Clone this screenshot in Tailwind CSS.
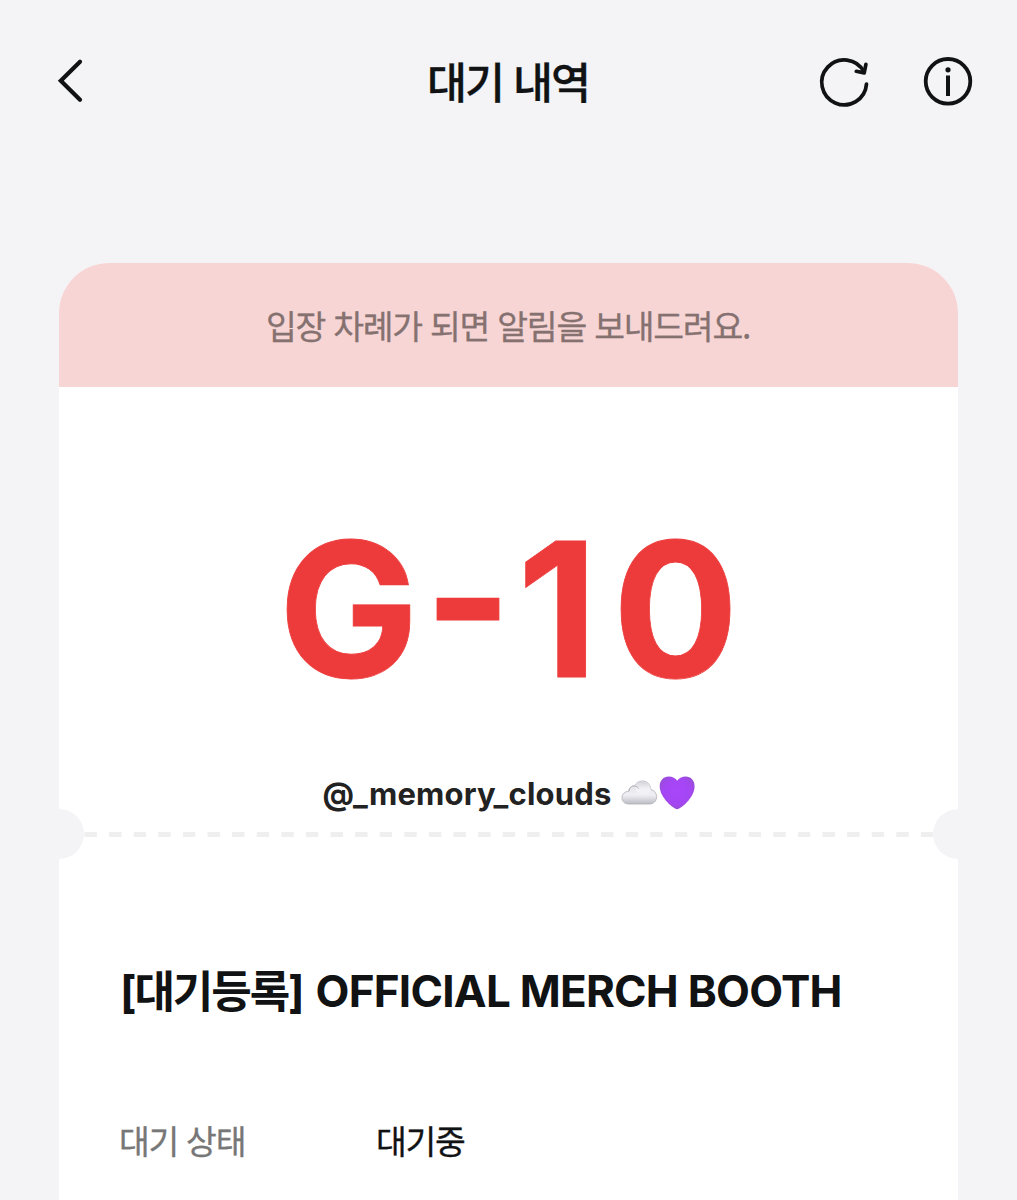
<!DOCTYPE html>
<html lang="ko">
  <head>
    <meta charset="UTF-8" />
    <meta name="viewport" content="width=device-width, initial-scale=1.0" />
    <title>대기 내역</title>
    <script src="https://cdn.jsdelivr.net/npm/@tailwindcss/browser@4"></script>
  </head>
  <body class="bg-[#f4f4f7] text-[#111213] font-['Inter','Noto_Sans_CJK_KR',sans-serif]">
    <div class="h-[1200px] overflow-hidden flex flex-col">
      <!-- Header -->
      <header class="h-[162px] shrink-0 grid grid-cols-3 items-center pl-[41px] pr-[42px]">
        <button class="w-10 h-14 ml-[9px]" aria-label="뒤로">
          <svg class="w-10 h-14" viewBox="0 0 40 56" fill="none" stroke="currentColor" stroke-width="4.2" stroke-linecap="round" stroke-linejoin="miter">
            <path d="M30 8.8 L10.8 27.7 L30 46.8" />
          </svg>
        </button>
        <h1 class="text-center text-[43.5px] leading-none font-medium tracking-[-2.1px] whitespace-nowrap font-['Noto_Sans_CJK_KR',sans-serif] [-webkit-text-stroke:0.3px]">대기 내역</h1>
        <div class="flex justify-end gap-[40px]">
          <button aria-label="새로고침">
            <svg class="w-[60px] h-[60px]" viewBox="0 0 60 60" fill="none" stroke="currentColor" stroke-width="3.7" stroke-linecap="round" stroke-linejoin="round">
              <path d="M51.5 33 A22.4 22.4 0 1 1 49 21" />
              <path d="M41.3 20.3 L49.2 21.9 L50.9 13.4" />
            </svg>
          </button>
          <button aria-label="안내">
            <svg class="w-[60px] h-[60px]" viewBox="0 0 60 60" fill="none">
              <circle cx="33" cy="30.3" r="22.3" stroke="currentColor" stroke-width="3.8" />
              <circle cx="33" cy="18.8" r="2.6" fill="currentColor" />
              <path d="M33 24.5 V45" stroke="currentColor" stroke-width="4" />
            </svg>
          </button>
        </div>
      </header>

      <!-- Ticket -->
      <main class="mt-[101px] mx-[59px] h-[937px] shrink-0 bg-white rounded-t-[50px] overflow-hidden">
        <div class="h-[124px] bg-[#f7d5d5] flex items-center justify-center">
          <p class="-mt-px -ml-px text-[33.5px] leading-none tracking-[-1.25px] text-[#85716f] font-['Noto_Sans_CJK_KR',sans-serif] whitespace-nowrap [-webkit-text-stroke:0.3px]">입장 차례가 되면 알림을 보내드려요.</p>
        </div>

        <!-- Waiting number -->
        <div class="h-[447px] flex flex-col items-center">
          <p class="mt-[128px] text-[187px] leading-[188px] font-bold text-[#ed3b3b] whitespace-nowrap [-webkit-text-stroke:0.8px]"><span class="tracking-[5.5px] [font-feature-settings:'case']">G-</span><span class="tracking-[14.5px]">1</span><span>0</span></p>
          <div class="mt-[68px] flex items-center h-[44px] gap-[9px]">
            <span class="text-[31px] leading-none font-bold tracking-[0.2px] text-[#222]">@_memory_clouds</span>
            <svg class="w-[74px] h-[36px]" viewBox="0 0 74 36">
              <defs>
                <linearGradient id="cloud" x1="0" y1="0" x2="0" y2="1">
                  <stop offset="0" stop-color="#dedee4" />
                  <stop offset=".6" stop-color="#f0f0f4" />
                  <stop offset="1" stop-color="#bcbcc5" />
                </linearGradient>
                <linearGradient id="puff" x1="0" y1="0" x2="0" y2="1">
                  <stop offset="0" stop-color="#d2d2d8" />
                  <stop offset=".6" stop-color="#f2f2f6" />
                </linearGradient>
                <radialGradient id="heart" cx=".5" cy=".45" r=".6">
                  <stop offset="0" stop-color="#a846fb" />
                  <stop offset=".65" stop-color="#a446f2" />
                  <stop offset="1" stop-color="#9550cf" />
                </radialGradient>
              </defs>
              <path d="M8 29 C3.5 29 1 26.3 1 22.8 C1 19 4 16.2 8 16.2 C8 12.8 10.6 10.7 13.6 11 C14.8 8 17.8 6 21.3 6 C26.3 6 29.6 9.6 29.7 14.4 C33.4 15.2 35.6 18.4 35.6 21.7 C35.6 26 32.6 29 28.3 29 Z" fill="url(#cloud)" stroke="#b0b0b8" stroke-width=".8" />
              <path d="M13.6 11 C14.8 8 17.8 6 21.3 6 C26.3 6 29.6 9.6 29.7 14.4 C29 19 24 20.5 20.5 18.5 C18 19.5 15 18.2 15.5 15.3" fill="url(#puff)" />
              <path d="M8 16.2 C8 12.8 10.6 10.7 13.6 11 C15.6 11.2 17 12.2 17.6 13.7" fill="none" stroke="#b5b5bd" stroke-width="1" />
              <path d="M56.2 34.2 C53 34.2 38.7 22.8 38.7 11.2 C38.7 5.4 42.5 1.4 47.6 1.4 C51.5 1.4 54.6 3.2 56.2 5.8 C57.8 3.2 60.9 1.4 64.8 1.4 C69.9 1.4 73.6 5.4 73.6 11.2 C73.6 22.8 59.4 34.2 56.2 34.2 Z" fill="url(#heart)" />
            </svg>
          </div>
        </div>

        <!-- Perforation -->
        <div class="relative -mt-[25px] h-[50px] flex items-center">
          <svg class="w-full h-[5px]" viewBox="0 0 899 5">
            <path d="M25.5 2.5 H874" stroke="#efeff0" stroke-width="5" stroke-dasharray="12.4 12.2" />
          </svg>
          <span class="absolute -left-[25px] top-0 w-[50px] h-[50px] rounded-full bg-[#f4f4f7]"></span>
          <span class="absolute -right-[25px] top-0 w-[50px] h-[50px] rounded-full bg-[#f4f4f7]"></span>
        </div>

        <!-- Details -->
        <section class="px-[61px] pt-[107px]">
          <h2 class="h-[50px] flex items-center text-[44px] leading-none font-bold whitespace-nowrap">
            <span class="mt-[2px] tracking-[-2.1px]">[대기등록]</span>
            <span class="ml-[13px] tracking-[-0.75px]">OFFICIAL MERCH BOOTH</span>
          </h2>
          <dl class="mt-[102px] h-[44px] flex items-center text-[33.5px] leading-none tracking-[-1.3px] font-['Noto_Sans_CJK_KR',sans-serif] [-webkit-text-stroke:0.3px]">
            <dt class="w-[256px] -ml-px mr-px text-[#777]">대기 상태</dt>
            <dd>대기중</dd>
          </dl>
        </section>
      </main>
    </div>
  </body>
</html>
